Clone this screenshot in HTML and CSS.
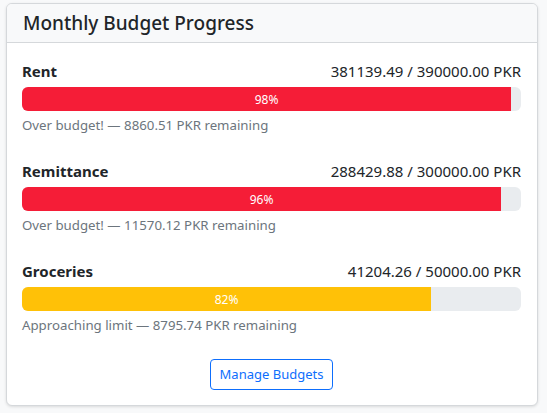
FILE: index.html
```html
<!DOCTYPE html>
<html lang="en">
<head>
    <meta charset="UTF-8">
    <meta name="viewport" content="width=device-width, initial-scale=1.0">
    <title>Monthly Budget Progress</title>
    <link rel="stylesheet" href="styles.css">
</head>
<body>
    <div class="card">
        <div class="card-header">
            <h5 class="card-title">Monthly Budget Progress</h5>
        </div>
        <div class="card-body">
            <div class="budget">
                <div class="budget-head">
                    <span class="budget-name">Rent</span>
                    <span class="budget-amount">381139.49 / 390000.00 PKR</span>
                </div>
                <div class="progress">
                    <div class="progress-bar danger" style="width: 98%">98%</div>
                </div>
                <div class="budget-note">Over budget! — 8860.51 PKR remaining</div>
            </div>

            <div class="budget">
                <div class="budget-head">
                    <span class="budget-name">Remittance</span>
                    <span class="budget-amount">288429.88 / 300000.00 PKR</span>
                </div>
                <div class="progress">
                    <div class="progress-bar danger" style="width: 96%">96%</div>
                </div>
                <div class="budget-note">Over budget! — 11570.12 PKR remaining</div>
            </div>

            <div class="budget">
                <div class="budget-head">
                    <span class="budget-name">Groceries</span>
                    <span class="budget-amount">41204.26 / 50000.00 PKR</span>
                </div>
                <div class="progress">
                    <div class="progress-bar warning" style="width: 82%">82%</div>
                </div>
                <div class="budget-note">Approaching limit — 8795.74 PKR remaining</div>
            </div>

            <div class="actions">
                <button class="btn-outline">Manage Budgets</button>
            </div>
        </div>
    </div>
</body>
</html>
```

FILE: styles.css
```css
body {
    font-family: "Noto Sans", "Open Sans", sans-serif;
    background-color: #f8f9fa;
    color: #212529;
    margin: 0;
    padding: 3px 9px 6px 6px;
}

.card {
    background-color: #fff;
    border: 1px solid #d5d8db;
    border-radius: 6px;
    box-shadow: 0 1px 3px rgba(0, 0, 0, 0.12);
    overflow: hidden;
}

.card-header {
    background-color: #f8f9fa;
    border-bottom: 1px solid #d5d8db;
    padding: 7px 16px;
}

.card-title {
    margin: 0;
    font-size: 19px;
    font-weight: 500;
    line-height: 24px;
}

.card-body {
    padding: 16px 16px 15px 15px;
}

.budget {
    margin-bottom: 24px;
}

.budget-head {
    display: flex;
    justify-content: space-between;
    align-items: baseline;
    font-size: 15px;
    line-height: 24px;
    margin-bottom: 4px;
}

.budget-name {
    font-weight: bold;
}

.progress {
    display: flex;
    height: 24px;
    background-color: #e9ecef;
    border-radius: 6px;
    overflow: hidden;
}

.progress-bar {
    display: flex;
    justify-content: center;
    align-items: center;
    color: #fff;
    font-size: 12px;
}

.danger {
    background-color: #f51d37;
}

.warning {
    background-color: #ffc107;
}

.budget-note {
    margin-top: 4px;
    font-size: 13.25px;
    line-height: 20px;
    color: #6c757d;
}

.actions {
    display: flex;
    justify-content: center;
}

.btn-outline {
    font-family: inherit;
    font-size: 13px;
    line-height: 21px;
    padding: 4px 9px;
    color: #0d6efd;
    background-color: #fff;
    border: 1px solid #0d6efd;
    border-radius: 4px;
    cursor: pointer;
}
```
